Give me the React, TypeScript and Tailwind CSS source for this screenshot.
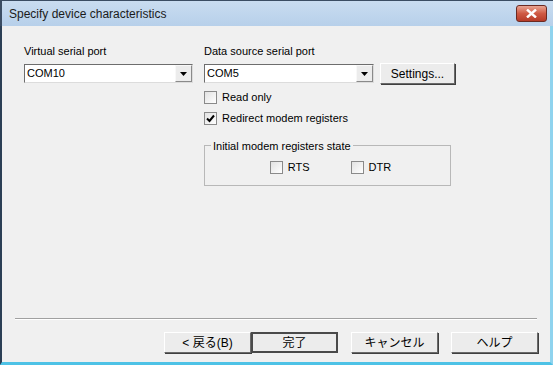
import React from "react"

const ui = { fontFamily: '"Liberation Sans", "Noto Sans CJK JP", sans-serif' }

function Combo({ value, width }: { value: string; width: string }) {
    return (
        <div className={`${width} h-[19px] flex bg-white border border-t-[#6d6d6d] border-l-[#6d6d6d] border-r-[#dcdcdc] border-b-[#dcdcdc]`}>
            <div className="flex-1 pl-[2px] text-[11px] leading-[17px] text-black">{value}</div>
            <div className="w-[17px] h-[17px] bg-[#ececec] border border-t-[#f8f8f8] border-l-[#f8f8f8] border-r-[#8a8a8a] border-b-[#8a8a8a] flex items-center justify-center">
                <svg width="7" height="4" viewBox="0 0 7 4">
                    <path d="M0 0H7L3.5 4Z" fill="#000" />
                </svg>
            </div>
        </div>
    )
}

function Check({ label, checked }: { label: string; checked?: boolean }) {
    return (
        <div className="flex items-center gap-[5px] text-[11px] leading-[13px] text-black">
            <div className="w-[13px] h-[13px] border border-[#8a8a8a] bg-gradient-to-br from-[#e2e2e2] to-white flex items-center justify-center">
                {checked && (
                    <svg width="9" height="9" viewBox="0 0 9 9">
                        <path d="M1 4.5L3.5 7L8 1.5" stroke="#000" strokeWidth="2" fill="none" />
                    </svg>
                )}
            </div>
            <span>{label}</span>
        </div>
    )
}

function Btn({ label, def, w = "w-[87px]" }: { label: string; def?: boolean; w?: string }) {
    return (
        <div className={`${w} h-[21px] flex items-center justify-center text-[12px] text-black bg-[#ececec] ${def ? "border-2 border-[#4a4a4a]" : "border border-t-white border-l-white border-r-[#6a6a6a] border-b-[#6a6a6a] shadow-[1px_1px_0_#404040]"}`}>
            {label}
        </div>
    )
}

export default function App() {
    return (
        <div className="w-[553px] h-[365px] flex flex-col bg-[#f0f0f0] overflow-hidden" style={ui}>
            <div className="h-[26px] flex items-center justify-between pl-[7px] pr-[6px] bg-gradient-to-b from-[#c9dcf0] to-[#b7d0ea] border-t border-l-2 border-[#3b4d63]">
                <span className="text-[12px] text-[#1b1b1b]">Specify device characteristics</span>
                <div className="w-[31px] h-[17px] rounded-[3px] border border-[#6b2a22] bg-gradient-to-b from-[#e8a493] via-[#cf5a44] to-[#b63b28] flex items-center justify-center">
                    <svg width="11" height="9" viewBox="0 0 11 9">
                        <path d="M1 0.5L10 8.5M10 0.5L1 8.5" stroke="#fff" strokeWidth="2.4" />
                    </svg>
                </div>
            </div>

            <div className="flex-1 flex flex-col border-l-2 border-[#2b3f55] border-r-[3px] border-r-[#8fd3ee] border-b-[3px] border-b-[#4ec2e6]">
                <div className="flex pl-[22px] pt-[19px] gap-[11px]">
                    <div className="flex flex-col gap-[6px]">
                        <span className="text-[11px] text-black leading-[13px]">Virtual serial port</span>
                        <Combo value="COM10" width="w-[169px]" />
                    </div>
                    <div className="flex flex-col">
                        <span className="text-[11px] text-black leading-[13px]">Data source serial port</span>
                        <div className="flex items-center gap-[6px] mt-[5px]">
                            <Combo value="COM5" width="w-[170px]" />
                            <Btn label="Settings..." w="w-[75px]" />
                        </div>
                        <div className="flex flex-col gap-[8px] mt-[7px]">
                            <Check label="Read only" />
                            <Check label="Redirect modem registers" checked />
                        </div>
                        <div className="mt-[20px] w-[247px] h-[41px] border border-[#b8b8b8] relative flex items-center justify-center gap-[41px] pl-[6px] pt-[4px]">
                            <span className="absolute -top-[8px] left-[6px] px-[2px] bg-[#f0f0f0] text-[11px] text-black">Initial modem registers state</span>
                            <Check label="RTS" />
                            <Check label="DTR" />
                        </div>
                    </div>
                </div>

                <div className="flex-1" />
                <div className="mx-[13px] h-[2px] border-t border-[#a0a0a0] border-b border-b-white" />
                <div className="flex justify-end pr-[12px] pt-[12px] pb-[9px]">
                    <Btn label="< 戻る(B)" />
                    <Btn label="完了" def />
                    <div className="w-[13px]" />
                    <Btn label="キャンセル" />
                    <div className="w-[13px]" />
                    <Btn label="ヘルプ" />
                </div>
            </div>
        </div>
    )
}
